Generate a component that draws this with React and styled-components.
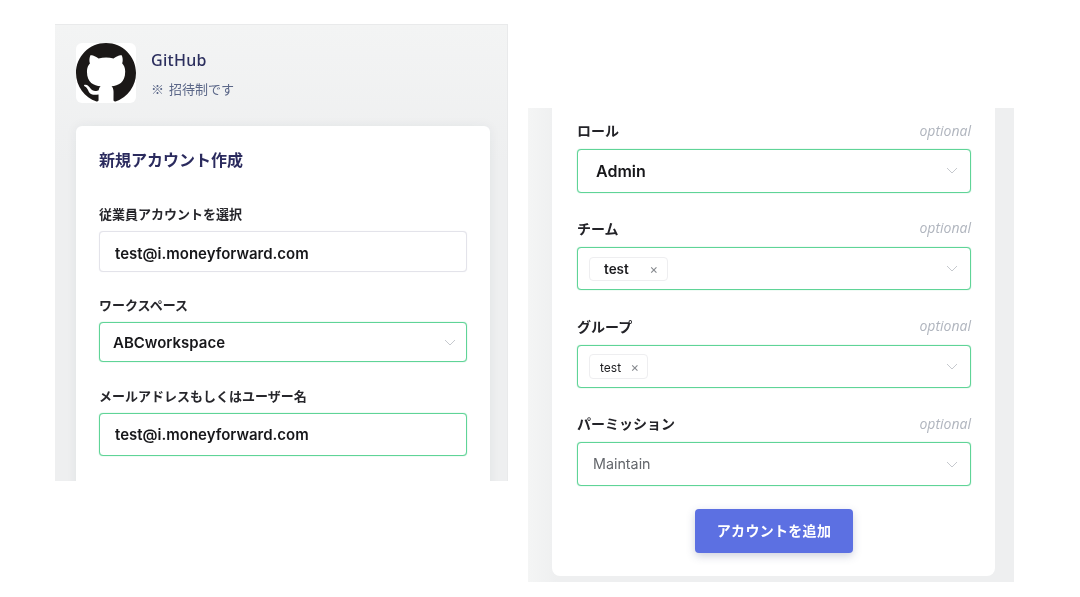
import React from 'react';
import styled, { createGlobalStyle } from 'styled-components';

const FONT = 'Inter, "Noto Sans CJK JP", sans-serif';

const GlobalStyle = createGlobalStyle`
  html, body {
    margin: 0;
    padding: 0;
    background: #fff;
    font-family: ${FONT};
  }
`;

function Chevron() {
  return (
    <ChevronIcon viewBox="0 0 12 7" aria-hidden="true">
      <polyline points="1,1 6,6 11,1" fill="none" stroke="#c6c9ce" strokeWidth="1" />
    </ChevronIcon>
  );
}

function GithubMark() {
  return (
    <svg viewBox="0 0 16 16" width="60" height="60" aria-hidden="true">
      <path
        fill="#1b1817"
        d="M8 0C3.58 0 0 3.58 0 8c0 3.54 2.29 6.53 5.47 7.59.4.07.55-.17.55-.38 0-.19-.01-.82-.01-1.49-2.01.37-2.53-.49-2.69-.94-.09-.23-.48-.94-.82-1.13-.28-.15-.68-.52-.01-.53.63-.01 1.08.58 1.23.82.72 1.21 1.87.87 2.33.66.07-.52.28-.87.51-1.07-1.78-.2-3.64-.89-3.64-3.95 0-.87.31-1.59.82-2.15-.08-.2-.36-1.02.08-2.12 0 0 .67-.21 2.2.82.64-.18 1.32-.27 2-.27.68 0 1.36.09 2 .27 1.53-1.04 2.2-.82 2.2-.82.44 1.1.16 1.92.08 2.12.51.56.82 1.27.82 2.15 0 3.07-1.87 3.75-3.65 3.95.29.25.54.73.54 1.48 0 1.07-.01 1.93-.01 2.2 0 .21.15.46.55.38A8.013 8.013 0 0016 8c0-4.42-3.58-8-8-8z"
      />
    </svg>
  );
}

function OptionalField({ label, children }) {
  return (
    <div>
      <LabelRow>
        <RightLabel>{label}</RightLabel>
        <Optional>optional</Optional>
      </LabelRow>
      {children}
    </div>
  );
}

export default function App() {
  return (
    <Page>
      <GlobalStyle />
      <LeftPanel>
        <ServiceHeader>
          <Avatar>
            <GithubMark />
          </Avatar>
          <ServiceText>
            <ServiceName>GitHub</ServiceName>
            <ServiceNote>※ 招待制です</ServiceNote>
          </ServiceText>
        </ServiceHeader>
        <LeftCard>
          <Title>新規アカウント作成</Title>
          <LeftField>
            <LeftLabel>従業員アカウントを選択</LeftLabel>
            <Box $h={41} $pad={16} $muted>
              <Value>test@i.moneyforward.com</Value>
            </Box>
          </LeftField>
          <LeftField>
            <LeftLabel>ワークスペース</LeftLabel>
            <Box $h={40} $pad={14} $chevronRight={10}>
              <Value>ABCworkspace</Value>
              <Chevron />
            </Box>
          </LeftField>
          <LeftField>
            <LeftLabel>メールアドレスもしくはユーザー名</LeftLabel>
            <Box $h={43} $pad={16}>
              <Value>test@i.moneyforward.com</Value>
            </Box>
          </LeftField>
        </LeftCard>
      </LeftPanel>

      <RightPanel>
        <RightCard>
          <FieldStack>
            <OptionalField label="ロール">
              <Box $h={43.5} $pad={19}>
                <Value $large>Admin</Value>
                <Chevron />
              </Box>
            </OptionalField>
            <OptionalField label="チーム">
              <Box $h={43.5} $pad={12}>
                <Tag $w={79} $bold>
                  test
                  <TagClose $bold>×</TagClose>
                </Tag>
                <Chevron />
              </Box>
            </OptionalField>
            <OptionalField label="グループ">
              <Box $h={43.5} $pad={12}>
                <Tag $w={59}>
                  test
                  <TagClose>×</TagClose>
                </Tag>
                <Chevron />
              </Box>
            </OptionalField>
            <OptionalField label="パーミッション">
              <Box $h={43.5} $pad={16}>
                <Placeholder>Maintain</Placeholder>
                <Chevron />
              </Box>
            </OptionalField>
          </FieldStack>
          <Actions>
            <AddButton type="button">アカウントを追加</AddButton>
          </Actions>
        </RightCard>
      </RightPanel>
    </Page>
  );
}

const Page = styled.div`
  width: 1080px;
  height: 597px;
  box-sizing: border-box;
  overflow: hidden;
  padding: 24px 0 0 55px;
  display: flex;
  align-items: flex-start;
  gap: 20px;
  background: #fff;
  filter: blur(0.35px);
`;

const LeftPanel = styled.section`
  width: 453px;
  height: 457px;
  box-sizing: border-box;
  overflow: hidden;
  padding: 18px 17px 0 21px;
  background: linear-gradient(#f3f4f4, #eeeff0 30%);
  border: solid #e9eaeb;
  border-width: 1px 1px 0 0;
`;

const ServiceHeader = styled.header`
  display: flex;
  align-items: flex-start;
  gap: 15px;
  margin-bottom: 23px;
`;

const Avatar = styled.div`
  width: 60px;
  height: 60px;
  border-radius: 6px;
  background: #fff;
  overflow: hidden;
  display: flex;
`;

const ServiceText = styled.div`
  display: flex;
  flex-direction: column;
  padding-top: 7px;
`;

const ServiceName = styled.div`
  font-family: "Noto Sans", sans-serif;
  font-size: 16px;
  font-weight: 500;
  line-height: 20px;
  letter-spacing: 0.3px;
  color: #2c2f5e;
`;

const ServiceNote = styled.div`
  margin-top: 10px;
  font-family: "Noto Sans CJK JP", sans-serif;
  font-size: 13px;
  line-height: 18px;
  word-spacing: 2px;
  color: #5b6788;
`;

const LeftCard = styled.div`
  background: #fff;
  border-radius: 6px 6px 0 0;
  padding: 23px 23px 0;
  height: 400px;
  box-shadow: 0 0 12px rgba(40, 50, 70, 0.06);
`;

const Title = styled.h2`
  margin: 0 0 34px;
  font-size: 16px;
  font-weight: 700;
  line-height: 22px;
  color: #2b2b5e;
`;

const LeftField = styled.div`
  margin-bottom: 24.4px;
`;

const LeftLabel = styled.div`
  font-size: 13px;
  font-weight: 700;
  line-height: 18px;
  margin-bottom: 8px;
  color: #26262b;
`;

const Box = styled.div`
  position: relative;
  box-sizing: border-box;
  height: ${(p) => p.$h}px;
  padding: ${(p) => (p.$muted ? 4 : 0)}px ${(p) => p.$chevronRight || 12}px 0 ${(p) => p.$pad - 1}px;
  display: flex;
  align-items: center;
  justify-content: space-between;
  background: #fff;
  border-radius: 4px;
  border: ${(p) => (p.$muted ? '1px solid #e3e3ea' : '1px solid #5fd497')};
  box-shadow: 0 0 1px ${(p) => (p.$muted ? '#e3e3ea' : '#6bd79d')};
`;

const Value = styled.span`
  font-size: ${(p) => (p.$large ? 16 : 15)}px;
  font-weight: 600;
  color: #17171a;
`;

const Placeholder = styled.span`
  margin-top: -2px;
  font-size: 14.3px;
  color: #63666b;
`;

const ChevronIcon = styled.svg`
  width: 12px;
  height: 7px;
  flex: none;
`;

const RightPanel = styled.section`
  width: 486px;
  margin-top: 84px;
  box-sizing: border-box;
  padding: 0 19px 6px 24px;
  background: linear-gradient(90deg, #f4f5f5, #eeeff0 6%);
`;

const RightCard = styled.div`
  background: #fff;
  border-radius: 0 0 8px 8px;
  padding: 13px 24px 23px 25px;
`;

const FieldStack = styled.div`
  display: flex;
  flex-direction: column;
  gap: 26.25px;
`;

const LabelRow = styled.div`
  height: 18px;
  margin-bottom: 10px;
  display: flex;
  align-items: center;
  justify-content: space-between;
`;

const RightLabel = styled.span`
  font-size: 14px;
  font-weight: 700;
  color: #232328;
`;

const Optional = styled.span`
  font-family: "Open Sans", sans-serif;
  font-size: 14px;
  font-style: italic;
  color: #b0b5be;
`;

const Tag = styled.div`
  box-sizing: border-box;
  width: ${(p) => p.$w}px;
  height: ${(p) => (p.$bold ? 24 : 25)}px;
  padding: ${(p) => (p.$bold ? '0 9px 0 14px' : '2px 8px 0 10px')};
  display: flex;
  align-items: center;
  justify-content: space-between;
  border: 1px solid #eeeef0;
  border-radius: 4px;
  font-size: ${(p) => (p.$bold ? 13.5 : 12)}px;
  font-weight: ${(p) => (p.$bold ? 600 : 400)};
  color: #1d1d20;
`;

const TagClose = styled.span`
  font-size: 13px;
  font-weight: 400;
  color: #85888d;
`;

const Actions = styled.div`
  display: flex;
  justify-content: center;
  margin-top: 23.25px;
`;

const AddButton = styled.button`
  width: 158px;
  height: 44px;
  padding: 0 0 2px;
  border: 0;
  border-radius: 4px;
  background: #5c70e2;
  color: #fff;
  font-family: ${FONT};
  font-size: 14px;
  font-weight: 700;
  letter-spacing: 0.3px;
  box-shadow: 0 3px 8px rgba(60, 70, 120, 0.25);
`;
